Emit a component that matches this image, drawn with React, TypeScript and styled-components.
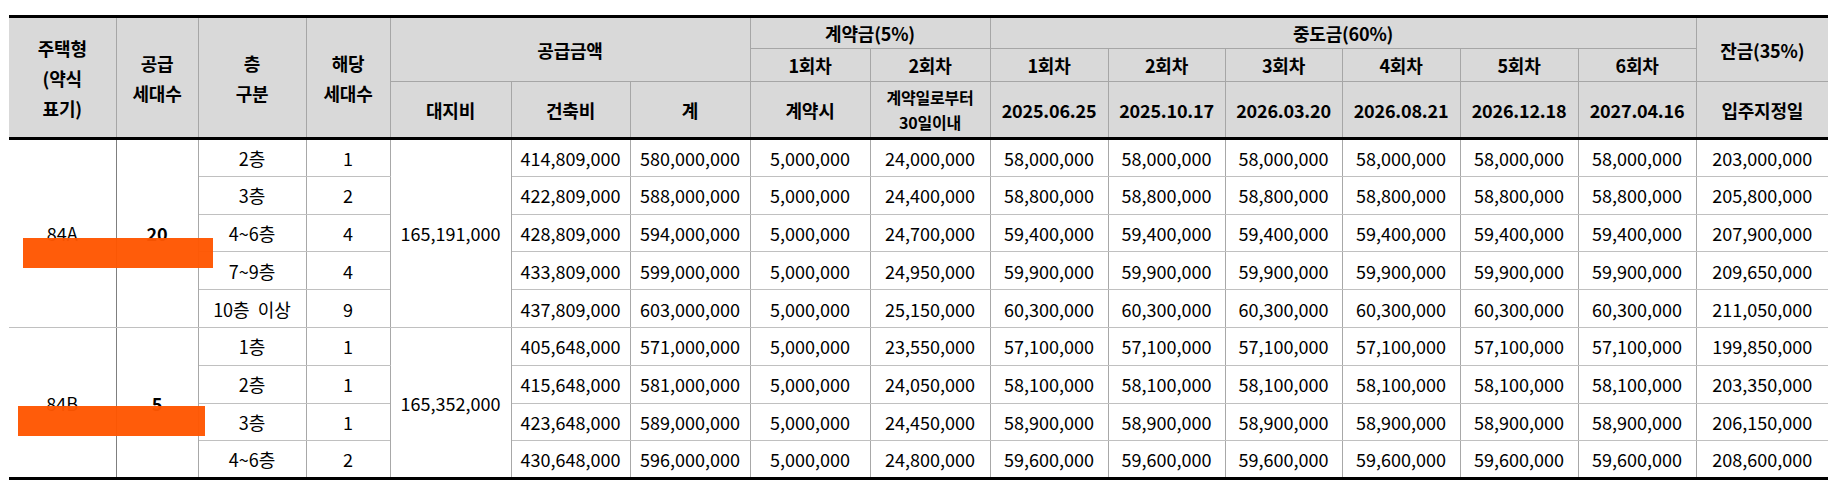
import styled, { createGlobalStyle } from 'styled-components';

const GlobalStyle = createGlobalStyle`
  html, body {
    margin: 0;
    padding: 0;
    background: #fff;
  }
  body {
    font-family: "Noto Sans CJK KR", "Noto Sans", sans-serif;
    color: #000;
  }
`;

const widths = [107, 82, 108, 84, 121, 119, 120, 120, 120, 118, 117, 117, 118, 118, 118, 132];
const rounds = ['1회차', '2회차', '3회차', '4회차', '5회차', '6회차'];
const dates = ['2025.06.25', '2025.10.17', '2026.03.20', '2026.08.21', '2026.12.18', '2027.04.16'];

type Floor = {
  floor: string;
  units: number;
  build: string;
  total: string;
  second: string;
  mid: string;
  balance: string;
};

type Group = {
  type: string;
  supply: number;
  land: string;
  floors: Floor[];
};

const groups: Group[] = [
  {
    type: '84A',
    supply: 20,
    land: '165,191,000',
    floors: [
      { floor: '2층', units: 1, build: '414,809,000', total: '580,000,000', second: '24,000,000', mid: '58,000,000', balance: '203,000,000' },
      { floor: '3층', units: 2, build: '422,809,000', total: '588,000,000', second: '24,400,000', mid: '58,800,000', balance: '205,800,000' },
      { floor: '4~6층', units: 4, build: '428,809,000', total: '594,000,000', second: '24,700,000', mid: '59,400,000', balance: '207,900,000' },
      { floor: '7~9층', units: 4, build: '433,809,000', total: '599,000,000', second: '24,950,000', mid: '59,900,000', balance: '209,650,000' },
      { floor: '10층  이상', units: 9, build: '437,809,000', total: '603,000,000', second: '25,150,000', mid: '60,300,000', balance: '211,050,000' },
    ],
  },
  {
    type: '84B',
    supply: 5,
    land: '165,352,000',
    floors: [
      { floor: '1층', units: 1, build: '405,648,000', total: '571,000,000', second: '23,550,000', mid: '57,100,000', balance: '199,850,000' },
      { floor: '2층', units: 1, build: '415,648,000', total: '581,000,000', second: '24,050,000', mid: '58,100,000', balance: '203,350,000' },
      { floor: '3층', units: 1, build: '423,648,000', total: '589,000,000', second: '24,450,000', mid: '58,900,000', balance: '206,150,000' },
      { floor: '4~6층', units: 2, build: '430,648,000', total: '596,000,000', second: '24,800,000', mid: '59,600,000', balance: '208,600,000' },
    ],
  },
];

const App = (): JSX.Element => {
  return (
    <Page>
      <GlobalStyle />
      <Table>
        <colgroup>
          {widths.map((w, idx) => (
            <col key={idx} style={{ width: w }} />
          ))}
        </colgroup>
        <thead>
          <HeadRow $height={31}>
            <Th rowSpan={3}>
              주택형
              <br />
              (약식
              <br />
              표기)
            </Th>
            <Th rowSpan={3}>
              공급
              <br />
              세대수
            </Th>
            <Th rowSpan={3}>
              층
              <br />
              구분
            </Th>
            <Th rowSpan={3}>
              해당
              <br />
              세대수
            </Th>
            <Th colSpan={3} rowSpan={2}>
              공급금액
            </Th>
            <Th colSpan={2}>계약금(5%)</Th>
            <Th colSpan={6}>중도금(60%)</Th>
            <Th rowSpan={2}>잔금(35%)</Th>
          </HeadRow>
          <HeadRow $height={33}>
            <Th>1회차</Th>
            <Th>2회차</Th>
            {rounds.map((r) => (
              <Th key={r}>{r}</Th>
            ))}
          </HeadRow>
          <HeadRow $height={57}>
            <Th>대지비</Th>
            <Th>건축비</Th>
            <Th>계</Th>
            <Th>계약시</Th>
            <Th $small>
              계약일로부터
              <br />
              30일이내
            </Th>
            {dates.map((d) => (
              <Th key={d}>{d}</Th>
            ))}
            <Th>입주지정일</Th>
          </HeadRow>
        </thead>
        <tbody>
          {groups.map((g, gi) =>
            g.floors.map((f, fi) => (
              <BodyRow key={`${g.type}-${fi}`} $first={gi === 0 && fi === 0}>
                {fi === 0 && (
                  <>
                    <Td rowSpan={g.floors.length} $dark>
                      {g.type}
                    </Td>
                    <Td rowSpan={g.floors.length} $bold>
                      {g.supply}
                    </Td>
                  </>
                )}
                <Td>{f.floor}</Td>
                <Td>{f.units}</Td>
                {fi === 0 && <Td rowSpan={g.floors.length}>{g.land}</Td>}
                <Td>{f.build}</Td>
                <Td>{f.total}</Td>
                <Td>5,000,000</Td>
                <Td>{f.second}</Td>
                {rounds.map((r) => (
                  <Td key={r}>{f.mid}</Td>
                ))}
                <Td>{f.balance}</Td>
              </BodyRow>
            ))
          )}
        </tbody>
      </Table>
      <Redaction $top={238} $left={23} $width={190} $height={30} />
      <Redaction $top={406} $left={18} $width={187} $height={30} />
    </Page>
  );
};

export default App;

const Page = styled.div`
  position: relative;
  width: 1834px;
  height: 490px;
  padding: 15px 0 0 9px;
  box-sizing: border-box;
`;

const Table = styled.table`
  border-collapse: collapse;
  table-layout: fixed;
  width: 1819px;
  border-top: 3px solid #000;
  border-bottom: 3px solid #000;
  border-left: hidden;
  border-right: hidden;
`;

const HeadRow = styled.tr<{ $height: number }>`
  height: ${({ $height }) => $height}px;
`;

const Th = styled.th<{ $small?: boolean }>`
  background: #d9d9d9;
  border: 1px solid #a6a6a6;
  padding: 0;
  text-align: center;
  vertical-align: middle;
  font-weight: 700;
  font-size: ${({ $small }) => ($small ? 16 : 18)}px;
  line-height: ${({ $small }) => ($small ? 25 : 30)}px;
  letter-spacing: -0.2px;
  white-space: nowrap;
`;

const BodyRow = styled.tr<{ $first?: boolean }>`
  height: 37.8px;

  & > td {
    ${({ $first }) => $first && 'border-top: 3px solid #000;'}
  }
`;

const Td = styled.td<{ $bold?: boolean; $dark?: boolean }>`
  border-top: 1px solid #c0c0c0;
  border-bottom: 1px solid #c0c0c0;
  border-left: 1px solid #a8a8a8;
  border-right: 1px solid ${({ $dark }) => ($dark ? '#7f7f7f' : '#a8a8a8')};
  padding: 0;
  text-align: center;
  vertical-align: middle;
  font-size: 18px;
  line-height: 24px;
  font-weight: ${({ $bold }) => ($bold ? 700 : 400)};
  white-space: pre;
`;

const Redaction = styled.div<{ $top: number; $left: number; $width: number; $height: number }>`
  position: absolute;
  top: ${({ $top }) => $top}px;
  left: ${({ $left }) => $left}px;
  width: ${({ $width }) => $width}px;
  height: ${({ $height }) => $height}px;
  background: rgba(255, 85, 0, 0.96);
`;
